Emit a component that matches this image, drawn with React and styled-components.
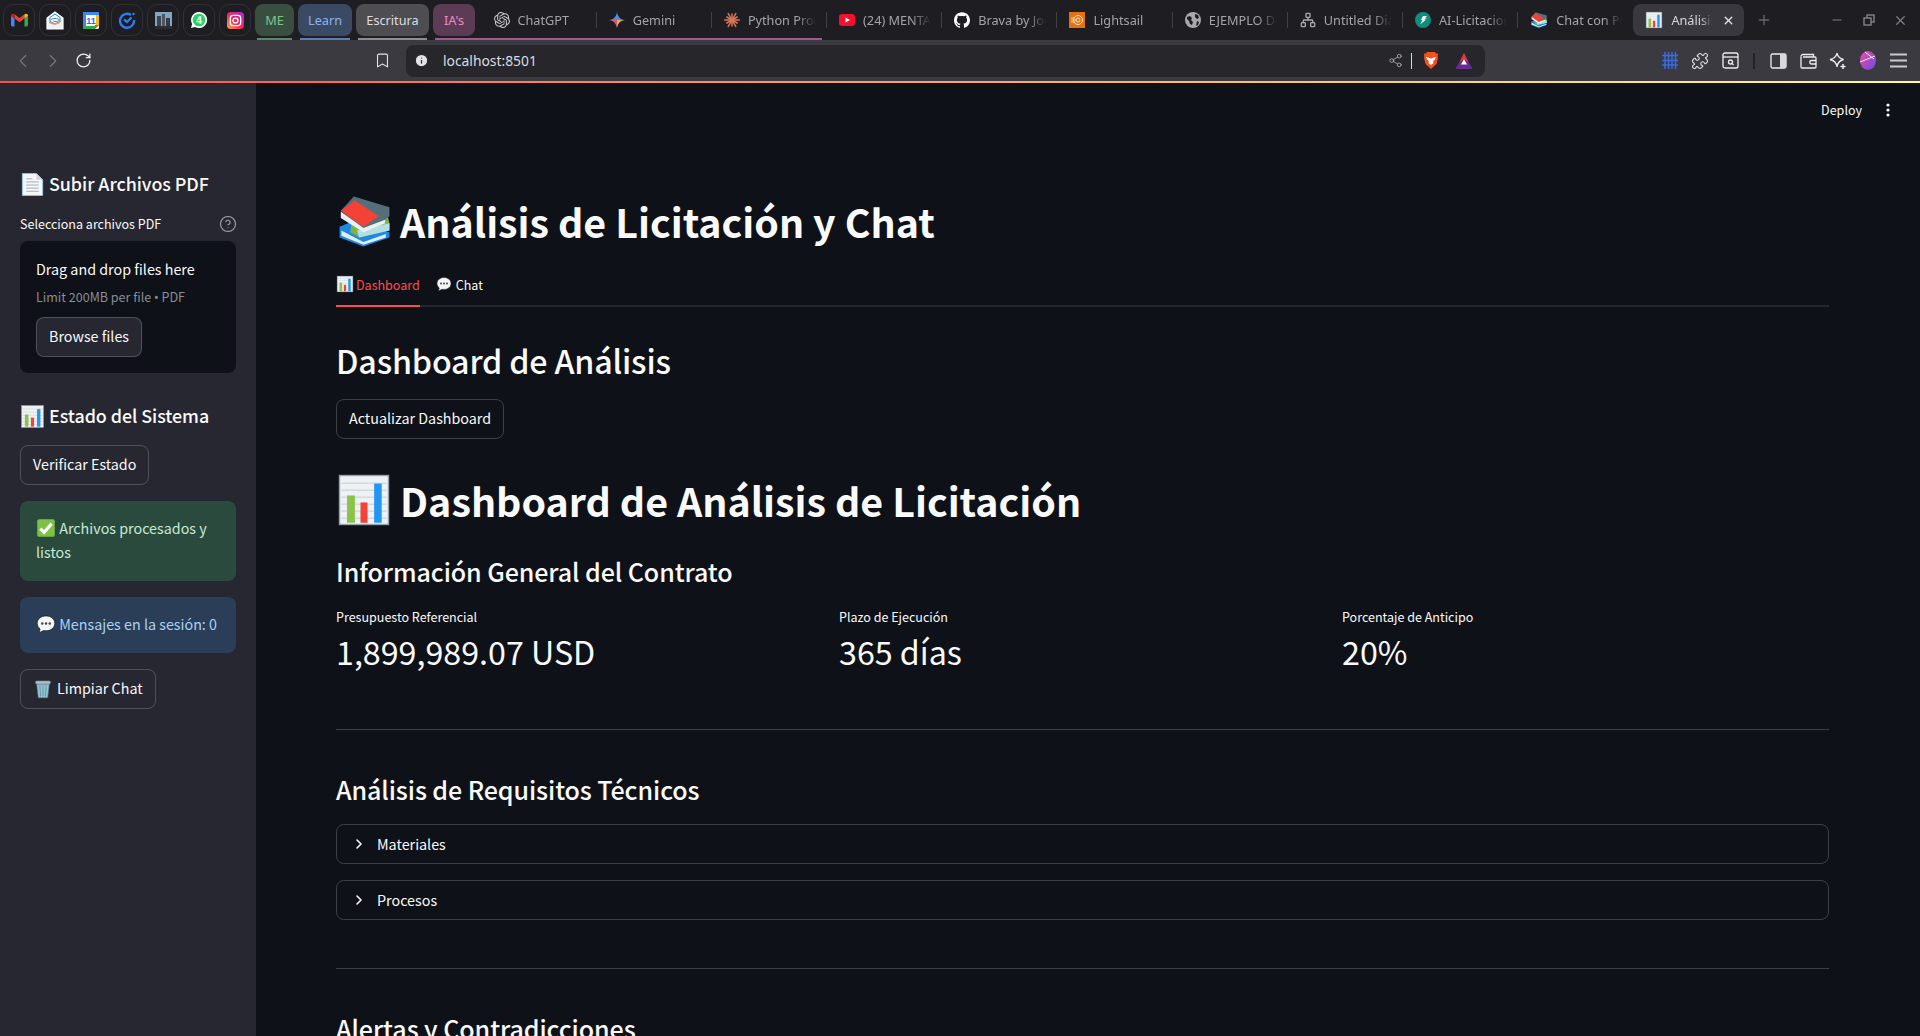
import React from 'react';
import styled, { createGlobalStyle } from 'styled-components';
import { SiGithub, SiOpenai } from 'react-icons/si';
import {
  ChevronLeft, ChevronRight, RotateCw, Bookmark, Info, Share2, Puzzle, X, Plus, Minus,
  CircleHelp, Network,
} from 'lucide-react';

const GlobalStyle = createGlobalStyle`
  html, body { margin: 0; padding: 0; height: 1036px; overflow: hidden; background: #0e1117; }
  * { box-sizing: border-box; }
`;

const UI = '"Noto Sans", sans-serif';
const APP = '"Noto Sans CJK SC", "Noto Sans", sans-serif';
// the latin of the CJK font is the app's face drawn about 12% larger
const fs = px => `${(px * 0.895).toFixed(2)}px`;

const Page = styled.div`
  width: 1920px;
  height: 1036px;
  overflow: hidden;
  display: flex;
  flex-direction: column;
  font-family: ${APP};
`;

/* browser chrome */
const TabStrip = styled.div`
  height: 40px;
  flex: none;
  background: #1d1d22;
  display: flex;
  align-items: flex-start;
  padding: 4px 0 0 3px;
  font-family: ${UI};
  font-size: 12.7px;
`;
const Pinned = styled.div`
  width: 32px;
  height: 32px;
  margin-right: 4px;
  border: 1px solid #303036;
  border-radius: 10px;
  display: flex;
  align-items: center;
  justify-content: center;
  flex: none;
`;
const Group = styled.div`
  position: relative;
  flex: none;
  width: ${p => p.$w}px;
  height: 32px;
  margin-right: 4px;
  border-radius: 8px;
  background: ${p => p.$bg};
  color: ${p => p.$fg};
  display: flex;
  align-items: center;
  justify-content: center;
  &::after {
    content: '';
    position: absolute;
    left: 2px;
    right: 2px;
    top: 34px;
    height: 2px;
    background: ${p => p.$line};
  }
`;
const GroupLine = styled.div`
  position: absolute;
  left: 435px;
  top: 38px;
  width: 387px;
  height: 2px;
  background: #a0598c;
`;
const TabGap = styled.div`
  width: 2.5px;
  flex: none;
`;
const Tab = styled.div`
  flex: none;
  width: 115.2px;
  height: 32px;
  padding-left: 12px;
  display: flex;
  align-items: center;
  gap: 8px;
  color: #a4a4a9;
  white-space: nowrap;
  overflow: hidden;
  position: relative;
  &::after {
    content: '';
    display: ${p => (p.$last ? 'none' : 'block')};
    position: absolute;
    right: 0;
    top: 8px;
    width: 1px;
    height: 16px;
    background: #3f3f45;
  }
`;
const TabLabel = styled.span`
  overflow: hidden;
  flex: 1;
  margin-right: 11px;
  -webkit-mask-image: linear-gradient(to right, #000 72%, transparent 100%);
`;
const ActiveLabel = styled(TabLabel)`
  margin-right: 2px;
`;
const ActiveTab = styled.div`
  flex: none;
  width: 111px;
  height: 32px;
  padding: 0 9px 0 12px;
  border-radius: 8px;
  background: #38383e;
  color: #d6d6da;
  display: flex;
  align-items: center;
  gap: 8px;
  white-space: nowrap;
`;
const WindowButtons = styled.div`
  flex: none;
  display: flex;
  align-items: center;
  height: 32px;
  margin-left: 12px;
  color: #7d7d83;
`;
const NewTab = styled.div`
  width: 65px;
  display: flex;
  color: #66666c;
`;
const WindowBtn = styled.div`
  width: 31.500px;
  display: flex;
  justify-content: center;
`;

const Toolbar = styled.div`
  height: 41px;
  flex: none;
  background: #3a3a40;
  display: flex;
  align-items: center;
  padding: 0 0 0 8px;
  color: #e2e2e6;
`;
const NavBtn = styled.div`
  width: 30px;
  flex: none;
  display: flex;
  justify-content: center;
  color: ${p => (p.$dim ? '#77777d' : '#f0f0f2')};
`;
const BookmarkSlot = styled.div`
  margin-left: 272px;
  width: 24px;
  flex: none;
  display: flex;
  justify-content: center;
`;
const UrlBar = styled.div`
  margin-left: 12px;
  width: 1079px;
  flex: none;
  height: 32px;
  border-radius: 8px;
  background: #26262b;
  display: flex;
  align-items: center;
  padding: 0 12px 0 8px;
  font-family: ${UI};
  font-size: 13.85px;
  color: #dcdce0;
`;
const UrlText = styled.span`
  margin-left: 14px;
  flex: 1;
`;
const UrlSep = styled.div`
  width: 1px;
  height: 16px;
  background: #d8d8dc;
  margin: 0 11px 0 8px;
`;
const UrlGap = styled.span`
  width: 16px;
`;
const ExtGroup = styled.div`
  margin-left: 175px;
  flex: none;
  display: flex;
  align-items: center;
  gap: 10px;
`;
const ExtSep = styled.div`
  width: 2px;
  height: 16px;
  background: #222227;
  margin: 0 3px;
`;
const ToolIcon = styled.div`
  width: 20px;
  display: flex;
  justify-content: center;
`;
const Gradient = styled.div`
  height: 2px;
  flex: none;
  background: linear-gradient(90deg, #ff4b4b, #fffd80);
`;

/* app */
const Body = styled.div`
  flex: 1;
  display: flex;
  min-height: 0;
`;
const Sidebar = styled.aside`
  width: 256px;
  flex: none;
  background: #262730;
  color: #fafafa;
  padding: 87px 20px 0;
`;
const SideTitle = styled.h2`
  margin: ${p => p.$mt || 0}px 0 0;
  padding-bottom: 2px;
  font-size: ${fs(20)};
  line-height: 26px;
  font-weight: 500;
  letter-spacing: -0.06px;
  height: 28px;
  display: flex;
  align-items: center;
  gap: 4px;
  svg { margin-top: 2px; }
`;
const LabelRow = styled.div`
  margin-top: 16px;
  height: 20px;
  padding-bottom: 2px;
  display: flex;
  justify-content: space-between;
  align-items: center;
  font-size: ${fs(14)};
  color: #fafafa;
`;
const HelpIcon = styled(CircleHelp)`
  margin: 2px -1px 0 0;
`;
const Dropzone = styled.div`
  margin-top: 7px;
  height: 132px;
  padding: 16px;
  background: #0e1117;
  border-radius: 8px;
`;
const DropTitle = styled.div`
  font-size: ${fs(16)};
  line-height: 24px;
`;
const DropHint = styled.div`
  margin-top: 6px;
  font-size: ${fs(14)};
  line-height: 20px;
  color: #8a8d93;
`;
const Bullet = styled.span`
  font-family: ${UI};
`;
const Button = styled.div`
  display: inline-flex;
  align-items: center;
  justify-content: center;
  height: 40px;
  padding: 0 12px 4px;
  border-radius: 8px;
  border: 1px solid rgba(250, 250, 250, 0.2);
  background: ${p => p.$bg || 'transparent'};
  color: #fafafa;
  font-size: ${fs(16)};
  gap: 4px;
  margin-top: ${p => p.$mt || 0}px;
  white-space: nowrap;
  svg { margin-top: 3px; }
`;
const Alert = styled.div`
  margin-top: 16px;
  padding: 15px 16px 17px;
  border-radius: 8px;
  background: ${p => p.$bg};
  color: ${p => p.$fg};
  font-size: ${fs(16)};
  line-height: 24px;
`;
const Main = styled.main`
  flex: 1;
  position: relative;
  background: #0e1117;
  color: #fafafa;
  padding: 0 91px 0 80px;
  overflow: hidden;
`;
const DeployBar = styled.div`
  position: absolute;
  top: 15px;
  right: 30px;
  display: flex;
  align-items: center;
  gap: 24px;
  font-size: ${fs(14)};
  line-height: 24px;
`;
const Title = styled.h1`
  margin: ${p => p.$mt}px 0 0;
  height: 60px;
  font-size: ${fs(44)};
  line-height: 60px;
  font-weight: 700;
  display: flex;
  align-items: center;
  gap: ${p => p.$gap}px;
  white-space: nowrap;
`;
const Tabs = styled.div`
  margin-top: 12px;
  height: 44px;
  display: flex;
  gap: 16px;
  border-bottom: 2px solid #26272e;
`;
const TabItem = styled.div`
  height: 44px;
  display: flex;
  align-items: center;
  gap: ${p => p.$gap}px;
  font-size: ${fs(14)};
  color: ${p => (p.$active ? '#ff4b4b' : '#fafafa')};
  border-bottom: 2px solid ${p => (p.$active ? '#ff4b4b' : 'transparent')};
`;
const SectionTitle = styled.h2`
  margin: ${p => p.$mt}px 0 0;
  font-size: ${fs(36)};
  line-height: 48px;
  font-weight: 500;
  letter-spacing: -0.18px;
`;
const SubTitle = styled.h3`
  margin: ${p => p.$mt}px 0 0;
  font-size: ${fs(28)};
  line-height: 40px;
  font-weight: 500;
  letter-spacing: -0.09px;
`;
const Metrics = styled.div`
  margin-top: 16px;
  display: grid;
  grid-template-columns: repeat(3, 1fr);
  gap: 16px;
`;
const MetricLabel = styled.div`
  font-size: ${fs(14)};
  line-height: 20px;
`;
const MetricValue = styled.div`
  margin-top: -1px;
  font-size: ${fs(36)};
  line-height: 50px;
`;
const Rule = styled.hr`
  margin: ${p => p.$mt}px 0 0;
  border: 0;
  height: 1px;
  background: rgba(250, 250, 250, 0.2);
`;
const Expander = styled.div`
  margin-top: ${p => p.$mt}px;
  height: 40px;
  border: 1px solid rgba(250, 250, 250, 0.2);
  border-radius: 8px;
  display: flex;
  align-items: center;
  padding: 0 0 2px 14px;
  gap: 10px;
  font-size: ${fs(16)};
  svg { margin-top: 2px; }
`;

/* emoji as drawings */
const EmojiSvg = styled.svg`
  flex: none;
  vertical-align: -4px;
`;
const Emoji = ({ size = 20, children }) => (
  <EmojiSvg width={size} height={size} viewBox="0 0 32 32">{children}</EmojiSvg>
);
const ChartEmoji = ({ size }) => (
  <Emoji size={size}>
    <rect x="2" y="2" width="28" height="28" fill="#eef2f4" stroke="#90a4ae" strokeWidth=".8" />
    {[6, 10, 14, 18, 22, 26].map(y => <rect key={y} x="3" y={y} width="26" height=".8" fill="#cfd8dc" />)}
    <rect x="6.300" y="13.400" width="4.500" height="15.600" fill="#8bc34a" />
    <rect x="14" y="17.400" width="4" height="11.600" fill="#f44336" />
    <rect x="21.800" y="6.600" width="4.300" height="22.400" fill="#2196f3" />
  </Emoji>
);
const PageEmoji = ({ size }) => (
  <Emoji size={size}>
    <path d="M3 2h18l8 8v20H3z" fill="#f5f7f8" stroke="#8fd0ee" strokeWidth="1" />
    <path d="M21 2l8 8h-8z" fill="#cfd8dc" />
    {[12, 16, 20, 24].map(y => <rect key={y} x="8" y={y} width="16" height="1.400" fill="#aab6bc" />)}
    <rect x="8" y="8" width="8" height="1.400" fill="#aab6bc" />
  </Emoji>
);
const BubbleEmoji = ({ size }) => (
  <Emoji size={size}>
    <path d="M16 3C8 3 2 8 2 15c0 3.500 1.700 6.500 4.500 8.800L5 30l7-3.500c1.300.3 2.600.4 4 .4 8 0 14-5 14-12S24 3 16 3z" fill="#f4f6f7" stroke="#222" strokeWidth="1.200" />
    <circle cx="10" cy="15" r="2" fill="#444" /><circle cx="16" cy="15" r="2" fill="#444" /><circle cx="22" cy="15" r="2" fill="#444" />
  </Emoji>
);
const CheckEmoji = ({ size }) => (
  <Emoji size={size}>
    <rect x="2" y="2" width="28" height="28" rx="3" fill="#7cc242" />
    <path d="M7 17l6 6L25 9" fill="none" stroke="#fff" strokeWidth="5" />
  </Emoji>
);
const TrashEmoji = ({ size }) => (
  <Emoji size={size}>
    <path d="M6 8h20l-2.500 22h-15z" fill="#90c8d8" stroke="#607d8b" />
    <path d="M11 10l1 18M16 10v18M21 10l-1 18" stroke="#546e7a" fill="none" />
    <rect x="4" y="3" width="24" height="5" rx="2" fill="#b0bec5" stroke="#607d8b" />
  </Emoji>
);
const BooksEmoji = ({ size }) => (
  <Emoji size={size}>
    <path d="M2 19l7-3 21 6v3l-14.600 5L2 25z" fill="#1e88e5" />
    <path d="M3 21l12.400 6.500L28 23v2l-12.600 4L3 24z" fill="#dfeef2" />
    <path d="M9 15l20-2 1 4v4l-17 4-5-3z" fill="#7cb342" />
    <path d="M11.700 21L30 17v4l-17 4z" fill="#b2dfe6" />
    <path d="M10 2l20 6v5l-2.400 2L15 20 2.700 10z" fill="#546e7a" />
    <path d="M2.700 10l7.800-6L24 13l-8.600 6z" fill="#f44336" />
    <path d="M2.700 10.400l12.700 9.200L27.600 15v2l-12.200 5-12.700-8z" fill="#eceff1" />
  </Emoji>
);

/* small brand marks */
const Gmail = () => (
  <svg width="17" height="14" viewBox="0 0 24 18">
    <path d="M0 3v13a2 2 0 0 0 2 2h3V7z" fill="#4285f4" />
    <path d="M24 3v13a2 2 0 0 1-2 2h-3V7z" fill="#34a853" />
    <path d="M5 7l7 5 7-5V1l-7 5-7-5z" fill="#ea4335" />
    <path d="M0 3l5 4V1L3 0C1 0 0 1 0 3z" fill="#c5221f" />
    <path d="M24 3l-5 4V1l2-1c2 0 3 1 3 3z" fill="#fbbc04" />
  </svg>
);
const MailShield = () => (
  <svg width="18" height="19" viewBox="0 0 18 19">
    <path d="M9 1L1 7v11h16V7z" fill="#eaf2fa" stroke="#fff" strokeWidth="1.200" />
    <path d="M4 6.500L9 3l5 3.500v4L9 13l-5-2.500z" fill="#fff" stroke="#2d7fd3" strokeWidth="1" />
    <path d="M3 11c4 3 8 3 12-1" fill="none" stroke="#f09a37" strokeWidth="1.300" />
    <path d="M5 9c0-2 8-2 8 0s-6 2-6 .5" fill="none" stroke="#2d7fd3" strokeWidth="1" />
  </svg>
);
const Calendar = () => (
  <svg width="16" height="17" viewBox="0 0 16 17">
    <rect x="0" y="0" width="16" height="17" rx="1.500" fill="#fff" />
    <rect x="0" y="0" width="16" height="3" fill="#4285f4" />
    <rect x="0" y="3" width="3" height="11" fill="#4285f4" />
    <rect x="13" y="3" width="3" height="10" fill="#fbbc04" />
    <rect x="0" y="14" width="12" height="3" fill="#34a853" />
    <path d="M12 17v-4h4z" fill="#ea4335" />
    <text x="8" y="12" fontSize="9" fontWeight="700" textAnchor="middle" fill="#1a73e8" fontFamily="Liberation Sans">11</text>
  </svg>
);
const TargetCheck = () => (
  <svg width="18" height="18" viewBox="0 0 18 18" fill="none" stroke="#2f7bf0" strokeWidth="2.400">
    <path d="M13 4a7 7 0 1 0 3 5" />
    <path d="M6 8.500l3 2.500 4.500-4.500" />
    <circle cx="15.500" cy="3" r="1.300" fill="#2f7bf0" stroke="none" />
  </svg>
);
const Photo = () => (
  <svg width="17" height="17" viewBox="0 0 17 17">
    <rect width="17" height="17" fill="#7fa6c2" />
    <rect x="2" y="4" width="4" height="13" fill="#3b4650" />
    <rect x="7" y="2" width="3" height="15" fill="#4d5760" />
    <rect x="11" y="6" width="4" height="11" fill="#333c44" />
    <rect x="0" y="14" width="17" height="3" fill="#2b2f33" />
  </svg>
);
const Instagram = () => (
  <svg width="17" height="17" viewBox="0 0 18 18">
    <defs>
      <linearGradient id="ig" x1="0" y1="1" x2="1" y2="0">
        <stop offset="0" stopColor="#fdb03a" /><stop offset=".45" stopColor="#f1285b" /><stop offset="1" stopColor="#a52be0" />
      </linearGradient>
    </defs>
    <rect width="18" height="18" rx="4" fill="url(#ig)" />
    <rect x="3.500" y="3.500" width="11" height="11" rx="3" fill="none" stroke="#fff" strokeWidth="1.400" />
    <circle cx="9" cy="9" r="2.600" fill="none" stroke="#fff" strokeWidth="1.400" />
  </svg>
);
const Whatsapp = () => (
  <svg width="18" height="18" viewBox="0 0 18 18">
    <path d="M9 1a8 8 0 0 0-6.900 12L1 17l4.100-1.100A8 8 0 1 0 9 1z" fill="#fff" />
    <circle cx="9" cy="9" r="6.300" fill="#25d366" />
    <text x="9" y="12.500" fontSize="10" fontWeight="700" textAnchor="middle" fill="#fff" fontFamily="Liberation Sans">4</text>
  </svg>
);
const Gemini = () => (
  <svg width="16" height="16" viewBox="0 0 16 16">
    <path d="M8 0c.6 4.500 3 7.400 8 8-5 .6-7.400 3.500-8 8-.6-4.500-3-7.400-8-8 5-.6 7.400-3.500 8-8z" fill="#4b8df0" />
    <path d="M8 8h8c-5 .6-7.400 3.500-8 8z" fill="#e8b13e" />
    <path d="M8 8v8c-.6-4.500-3-7.400-8-8z" fill="#e25563" />
  </svg>
);
const ClaudeBurst = () => (
  <svg width="16" height="16" viewBox="0 0 16 16" stroke="#d97757" strokeWidth="1.500" strokeLinecap="round">
    {Array.from({ length: 12 }).map((_, i) => {
      const a = (i * Math.PI) / 6;
      const r = i % 2 ? 6 : 7.500;
      return <line key={i} x1="8" y1="8" x2={8 + r * Math.cos(a)} y2={8 + r * Math.sin(a)} />;
    })}
  </svg>
);
const Youtube = () => (
  <svg width="16" height="12" viewBox="0 0 16 12">
    <rect width="16" height="12" rx="3" fill="#f70f2f" />
    <path d="M6.500 3.500L11 6l-4.500 2.500z" fill="#fff" />
  </svg>
);
const Lightsail = () => (
  <svg width="16" height="16" viewBox="0 0 16 16">
    <rect width="16" height="16" fill="#e27310" />
    <circle cx="9" cy="8" r="4.500" fill="none" stroke="#fde3c6" strokeWidth="1" />
    <circle cx="9" cy="8" r="2" fill="none" stroke="#fde3c6" strokeWidth="1" />
    <path d="M2 6h4M2 8h5M2 10h4" stroke="#fde3c6" strokeWidth=".8" />
  </svg>
);
const GlobeFill = () => (
  <svg width="16" height="16" viewBox="0 0 16 16">
    <circle cx="8" cy="8" r="8" fill="#a8a8ae" />
    <path d="M2 5l3-1 2 2-1 2 2 2-1 3-2-1-1-3-2-2zM10 2l3 1 1 3-2 1-2-2zM12 9l2 1-1 3-2 1z" fill="#1d1d22" />
  </svg>
);
const Deepseek = () => (
  <svg width="16" height="16" viewBox="0 0 16 16">
    <circle cx="8" cy="8" r="8" fill="#0f8d7e" />
    <path d="M5 12.500l2.500-4.500H6l2-4h4l-2 2.500h2l-3 1.500h1.500z" fill="#fff" />
  </svg>
);
const BraveLion = () => (
  <svg width="16" height="19" viewBox="0 0 16 19">
    <path d="M4 1h8l1 1.500h2l-.3 3L15 7l-1.500 6L8 18l-5.500-5L1 7l.3-1.500L1 2.500h2z" fill="#f4511e" />
    <path d="M3 6l3 .8 2 1 2-1L13 6l-1.500 3-1.500 1 .5 2L8 14l-2.500-2 .5-2-1.500-1z" fill="#fff" />
  </svg>
);
const BatTriangle = () => (
  <svg width="18" height="18" viewBox="0 0 18 18">
    <path d="M9 1l8.500 16H.500z" fill="#662d91" />
    <path d="M9 1l4.500 9-4.500-3-4.500 3z" fill="#e03a2f" />
    <path d="M9 7l3 5.500H6z" fill="#fff" />
  </svg>
);
const Grid = () => (
  <svg width="16" height="17" viewBox="0 0 16 17" stroke="#3b6be0" strokeWidth="1.500">
    <path d="M3 0v17M6.500 0v17M10 0v17M13.500 0v17M0 3.500h16M0 8.500h16M0 13h16" />
  </svg>
);
const SearchBox = () => (
  <svg width="17" height="17" viewBox="0 0 17 17" fill="none" stroke="#eee" strokeWidth="1.300">
    <rect x="1" y="1" width="15" height="15" rx="2" />
    <path d="M1 5h15" />
    <circle cx="8.500" cy="10" r="2" />
    <path d="M10 11.500l1.500 1.500" />
  </svg>
);
const SideToggle = () => (
  <svg width="17" height="16" viewBox="0 0 17 16">
    <rect x="1" y="1" width="15" height="14" rx="1.500" fill="none" stroke="#eee" strokeWidth="1.300" />
    <rect x="10" y="1" width="6" height="14" fill="#d8d8dc" />
  </svg>
);
const WalletIcon = () => (
  <svg width="17" height="16" viewBox="0 0 17 16" fill="none" stroke="#eee" strokeWidth="1.300">
    <path d="M1 3.500A2 2 0 0 1 3 1.500h10.500v2.500" />
    <path d="M1 3.500V14a1 1 0 0 0 1 1h13a1 1 0 0 0 1-1V5a1 1 0 0 0-1-1H3" />
    <path d="M16 7.500h-4.500a1.500 1.500 0 0 0 0 3.500H16" />
  </svg>
);
const StarPlus = () => (
  <svg width="18" height="18" viewBox="0 0 18 18" fill="none" stroke="#eee" strokeWidth="1.300">
    <path d="M8 1c.6 3.500 2.500 5.500 6.500 6.500C10.500 8.500 8.600 10.500 8 15c-.6-4.500-2.500-6.500-7-7.500C5.500 6.500 7.400 4.500 8 1z" />
    <path d="M14 12v5M11.500 14.500h5" stroke="#eee" strokeWidth="1.500" />
  </svg>
);
const Ball = () => (
  <svg width="16" height="19" viewBox="0 0 16 19">
    <defs>
      <linearGradient id="ball" x1="0" y1="0" x2="1" y2="1">
        <stop offset="0" stopColor="#f24aa0" /><stop offset="1" stopColor="#6b4be8" />
      </linearGradient>
    </defs>
    <ellipse cx="8" cy="9.500" rx="8" ry="9.500" fill="url(#ball)" />
    <path d="M0 11L15 5M5 1l9 7" stroke="#fff" strokeWidth=".9" fill="none" />
  </svg>
);
const Burger = () => (
  <svg width="17" height="15" viewBox="0 0 17 15" stroke="#c9c9cd" strokeWidth="2">
    <path d="M0 1.500h17M0 7.500h17M0 13.500h17" />
  </svg>
);
const Dots = () => (
  <svg width="4" height="14" viewBox="0 0 4 14" fill="#fafafa">
    <circle cx="2" cy="2" r="1.600" /><circle cx="2" cy="7" r="1.600" /><circle cx="2" cy="12" r="1.600" />
  </svg>
);
const Restore = () => (
  <svg width="12" height="12" viewBox="0 0 12 12" fill="none" stroke="#7d7d83" strokeWidth="1.500">
    <rect x="1" y="4" width="7" height="7" /><path d="M4 4V1h7v7H8" />
  </svg>
);

const pinned = [Gmail, MailShield, Calendar, TargetCheck, Photo, Whatsapp, Instagram];
const groups = [
  { label: 'ME', w: 39, bg: '#3a4e40', fg: '#7fc28f', line: '#5b8a6a' },
  { label: 'Learn', w: 54, bg: '#3a4a63', fg: '#8ab4f0', line: '#5c7eb5' },
  { label: 'Escritura', w: 73, bg: '#4d4d52', fg: '#dedee0', line: '#8e8e92' },
  { label: "IA's", w: 42, bg: '#5c3c55', fg: '#f08ac6', line: '#a0598c' },
];
const tabs = [
  { label: 'ChatGPT', icon: <SiOpenai size={16} color="#c9c9cd" /> },
  { label: 'Gemini', icon: <Gemini /> },
  { label: 'Python Programming', icon: <ClaudeBurst /> },
  { label: '(24) MENTALIDAD', icon: <Youtube /> },
  { label: 'Brava by Joe Doe', icon: <SiGithub size={16} color="#fff" /> },
  { label: 'Lightsail', icon: <Lightsail /> },
  { label: 'EJEMPLO DE', icon: <GlobeFill /> },
  { label: 'Untitled Diagram', icon: <Network size={16} color="#a8a8ae" /> },
  { label: 'AI-Licitacion', icon: <Deepseek /> },
  { label: 'Chat con PDF', icon: <BooksEmoji size={18} />, last: true },
];

export default function App() {
  return (
    <Page>
      <GlobalStyle />
      <TabStrip>
        {pinned.map((Icon, i) => <Pinned key={i}><Icon /></Pinned>)}
        {groups.map(g => (
          <Group key={g.label} $w={g.w} $bg={g.bg} $fg={g.fg} $line={g.line}>{g.label}</Group>
        ))}
        <GroupLine />
        <TabGap />
        {tabs.map(t => (
          <Tab key={t.label} $last={t.last}>
            {t.icon}
            <TabLabel>{t.label}</TabLabel>
          </Tab>
        ))}
        <ActiveTab>
          <ChartEmoji size={18} />
          <ActiveLabel>Análisis de</ActiveLabel>
          <X size={13} color="#e0e0e4" strokeWidth={2.500} />
        </ActiveTab>
        <WindowButtons>
          <NewTab><Plus size={16} /></NewTab>
          <WindowBtn><Minus size={14} /></WindowBtn>
          <WindowBtn><Restore /></WindowBtn>
          <WindowBtn><X size={15} /></WindowBtn>
        </WindowButtons>
      </TabStrip>
      <Toolbar>
        <NavBtn $dim><ChevronLeft size={22} strokeWidth={1.200} /></NavBtn>
        <NavBtn $dim><ChevronRight size={22} strokeWidth={1.200} /></NavBtn>
        <NavBtn><RotateCw size={17} strokeWidth={1.800} /></NavBtn>
        <BookmarkSlot><Bookmark size={17} strokeWidth={1.600} /></BookmarkSlot>
        <UrlBar>
          <Info size={15} color="#26262b" fill="#e4e4e8" />
          <UrlText>localhost:8501</UrlText>
          <Share2 size={15} color="#b4b4b8" strokeWidth={1.300} />
          <UrlSep />
          <BraveLion />
          <UrlGap />
          <BatTriangle />
        </UrlBar>
        <ExtGroup>
          <ToolIcon><Grid /></ToolIcon>
          <ToolIcon><Puzzle size={18} strokeWidth={1.500} /></ToolIcon>
          <ToolIcon><SearchBox /></ToolIcon>
          <ExtSep />
          <ToolIcon><SideToggle /></ToolIcon>
          <ToolIcon><WalletIcon /></ToolIcon>
          <ToolIcon><StarPlus /></ToolIcon>
          <ToolIcon><Ball /></ToolIcon>
          <ToolIcon><Burger /></ToolIcon>
        </ExtGroup>
      </Toolbar>
      <Gradient />
      <Body>
        <Sidebar>
          <SideTitle><PageEmoji size={25} />Subir Archivos PDF</SideTitle>
          <LabelRow>
            Selecciona archivos PDF
            <HelpIcon size={18} color="#a3a4a9" strokeWidth={1.500} />
          </LabelRow>
          <Dropzone>
            <DropTitle>Drag and drop files here</DropTitle>
            <DropHint>Limit 200MB per file <Bullet>•</Bullet> PDF</DropHint>
            <Button $bg="#262730" $mt={9}>Browse files</Button>
          </Dropzone>
          <SideTitle $mt={29}><ChartEmoji size={25} />Estado del Sistema</SideTitle>
          <Button $mt={15}>Verificar Estado</Button>
          <Alert $bg="#2b4a3e" $fg="#c7ead4"><CheckEmoji size={20} /> Archivos procesados y listos</Alert>
          <Alert $bg="#2a3e58" $fg="#a9d3f5"><BubbleEmoji size={20} /> Mensajes en la sesión: 0</Alert>
          <Button $mt={16}><TrashEmoji size={20} /> Limpiar Chat</Button>
        </Sidebar>
        <Main>
          <DeployBar>Deploy <Dots /></DeployBar>
          <Title $mt={108} $gap={7}><BooksEmoji size={57} />Análisis de Licitación y Chat</Title>
          <Tabs>
            <TabItem $active $gap={2}><ChartEmoji size={18} />Dashboard</TabItem>
            <TabItem $gap={4}><BubbleEmoji size={16} />Chat</TabItem>
          </Tabs>
          <SectionTitle $mt={29}>Dashboard de Análisis</SectionTitle>
          <Button $mt={15}>Actualizar Dashboard</Button>
          <Title $mt={31} $gap={8}><ChartEmoji size={56} />Dashboard de Análisis de Licitación</Title>
          <SubTitle $mt={21}>Información General del Contrato</SubTitle>
          <Metrics>
            <div><MetricLabel>Presupuesto Referencial</MetricLabel><MetricValue>1,899,989.07 USD</MetricValue></div>
            <div><MetricLabel>Plazo de Ejecución</MetricLabel><MetricValue>365 días</MetricValue></div>
            <div><MetricLabel>Porcentaje de Anticipo</MetricLabel><MetricValue>20%</MetricValue></div>
          </Metrics>
          <Rule $mt={53} />
          <SubTitle $mt={39}>Análisis de Requisitos Técnicos</SubTitle>
          <Expander $mt={15}><ChevronRight size={16} strokeWidth={2.400} />Materiales</Expander>
          <Expander $mt={16}><ChevronRight size={16} strokeWidth={2.400} />Procesos</Expander>
          <Rule $mt={48} />
          <SubTitle $mt={39}>Alertas y Contradicciones</SubTitle>
        </Main>
      </Body>
    </Page>
  );
}
